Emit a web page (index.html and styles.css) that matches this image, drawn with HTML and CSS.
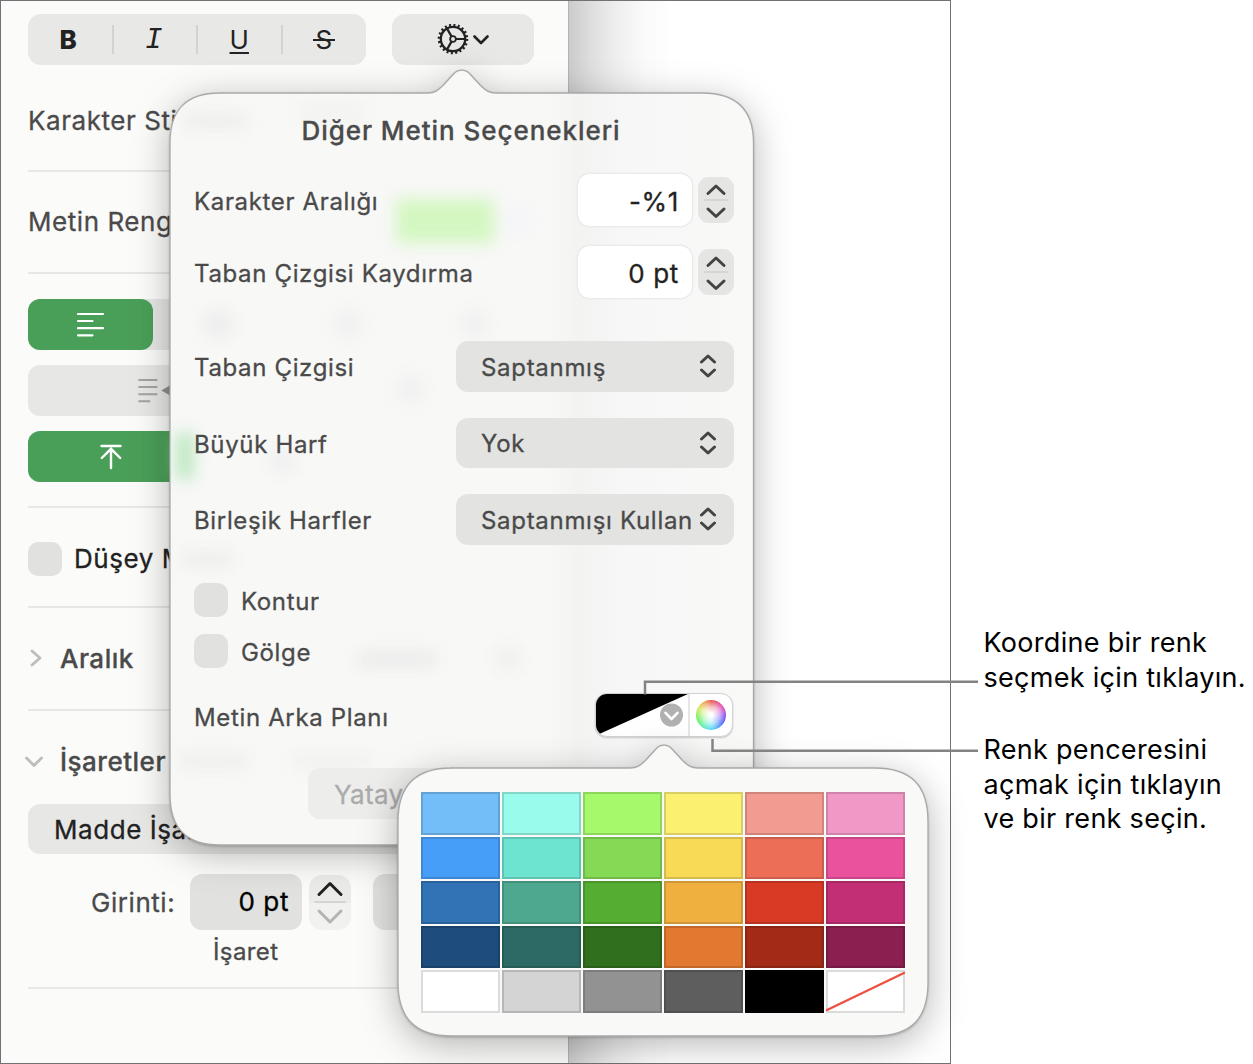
FILE: index.html
```html
<!DOCTYPE html>
<html lang="tr">
<head>
	<meta charset="UTF-8">
	<meta name="viewport" content="width=device-width, initial-scale=1.0">
	<title>Diğer Metin Seçenekleri</title>
	<link rel="stylesheet" href="styles.css">
</head>
<body>
	<div class="window">
		<div class="sidebar">
			<div class="toolbar">
				<div class="styles">
					<div class="bold">B</div>
					<div class="italic">I</div>
					<div class="underline">U</div>
					<div class="strike"><span>S</span></div>
				</div>
				<div class="gear">
					<svg width="32" height="32" viewBox="-16 -15 32 32" fill="none" stroke="#222">
						<circle r="12.2" stroke-width="2.3"/>
						<circle r="14" stroke-width="2.6" stroke-dasharray="2 2.398"/>
						<circle r="2.9" stroke-width="1.8"/>
						<path d="M3 0H12M-1.5 2.6L-6.1 10.6M-1.5 -2.6L-6.1 -10.6" stroke-width="2.2"/>
					</svg>
					<svg width="16" height="10" viewBox="0 0 16 10" fill="none" stroke="#222" stroke-width="2.6" stroke-linecap="round" stroke-linejoin="round"><path d="M1.5 1.5L8 8L14.5 1.5"/></svg>
				</div>
			</div>
			<div class="row style-row"><span class="label">Karakter Stilleri</span></div>
			<div class="row color-row"><span class="label">Metin Rengi</span></div>
			<div class="group first">
				<div class="on quarter">
					<svg width="28" height="26" viewBox="0 0 28 26" stroke="#fff" stroke-width="2.2" stroke-linecap="round"><path d="M1 2H26M1 9H15.500M1 16.2H26M1 23.3H15.500"/></svg>
				</div>
			</div>
			<div class="group indent">
				<svg width="50" height="26" viewBox="0 0 50 26" stroke="#a3a3a3" stroke-width="2.1" stroke-linecap="round"><path d="M1.2 2H18.5M1.2 9H18.5M1.2 16.2H18.5M1.2 23.3H11.5"/><path d="M25.500 12.500L34 7.500V17.500Z" fill="#8e8e8e" stroke="#8e8e8e"/></svg>
			</div>
			<div class="group last">
				<div class="on third">
					<svg width="22" height="26" viewBox="0 0 22 26" fill="none" stroke="#fff" stroke-width="2.4" stroke-linecap="round"><path d="M1.500 2H20.500M11 5V24M1.800 14L11 4.800L20.200 14"/></svg>
				</div>
			</div>
			<div class="row vertical-row"><i class="check"></i><span class="label dark">Düşey Metin</span></div>
			<div class="row spacing-row">
				<svg class="fold" width="16" height="20" viewBox="0 0 16 20"><path d="M4 3L12 10L4 17"/></svg>
				<span class="label head">Aralık</span>
			</div>
			<div class="row bullets-row">
				<svg class="fold" width="18" height="14" viewBox="0 0 18 14"><path d="M1.500 3L9 10.500L16.500 3"/></svg>
				<span class="label head">İşaretler</span>
			</div>
			<div class="bullet-select"><span class="label dark">Madde İşaretleri</span></div>
			<div class="indent-row">
				<span class="label girinti">Girinti:</span>
				<div class="value">0 pt</div>
				<div class="big-stepper">
					<svg width="42" height="55" viewBox="0 0 42 55" fill="none" stroke-width="3" stroke-linecap="round" stroke-linejoin="round"><path d="M10 19.500L21 8.500L32 19.500" stroke="#222"/><path d="M6 27H36" stroke="#d4d4d4" stroke-width="2"/><path d="M10 36L21 47L32 36" stroke="#b4b4b4"/></svg>
				</div>
				<div class="value second"></div>
			</div>
			<div class="captions"><span>İşaret</span></div>
		</div>
		<div class="canvas"></div>
	</div>

	<div class="popover options">
		<svg class="bubble" width="584" height="777" viewBox="0 0 584 777">
			<defs>
				<linearGradient id="glass">
					<stop offset="0" stop-color="#f8f8f7"/>
					<stop offset=".65" stop-color="#f8f8f7"/>
					<stop offset=".7" stop-color="#f3f3f2"/>
					<stop offset=".78" stop-color="#f7f7f7"/>
					<stop offset="1" stop-color="#f9f9f8"/>
				</linearGradient>
			</defs>
			<path class="shape" fill="url(#glass)" d="M48 24H258C266 24 269 20 273 16.500L283.500 5C288 -.3 295.500 -.3 300 5L310.500 16.500C314.500 20 317.500 24 326 24H532C567 24 583.500 41 583.500 74V725C583.500 759 567 776 532 776H50C16 776 0 759 0 725V74C0 41 16 24 50 24Z"/>
			<g class="ghost">
				<rect x="226" y="130" width="98" height="44" fill="#d3f7c0"/>
				<rect x="7" y="364" width="16" height="46" fill="#b5e6bb"/>
				<circle cx="347" cy="151" r="12" fill="#f4f3fa"/>
				<rect x="14" y="46" width="62" height="12" fill="#ebebea"/>
				<rect x="130" y="38" width="64" height="12" fill="#f0f0ef"/>
				<circle cx="48" cy="255" r="14" fill="#ececec"/>
				<circle cx="177" cy="255" r="14" fill="#f0f0f0"/>
				<circle cx="304" cy="255" r="14" fill="#f0f0f0"/>
				<circle cx="240" cy="320" r="14" fill="#f0f0f0"/>
				<circle cx="112" cy="392" r="12" fill="#eeeeee"/>
				<rect x="12" y="484" width="50" height="12" fill="#ebebea"/>
				<rect x="188" y="582" width="78" height="16" fill="#ebebea"/>
				<circle cx="338" cy="590" r="12" fill="#efefee"/>
				<rect x="10" y="686" width="66" height="12" fill="#ececeb"/>
				<rect x="124" y="686" width="76" height="12" fill="#efefee"/>
			</g>
		</svg>
		<h1>Diğer Metin Seçenekleri</h1>
		<div class="line number">
			<span>Karakter Aralığı</span>
			<div class="field">-%1</div>
			<div class="stepper"><svg width="36" height="46" viewBox="0 0 36 46"><path d="M10 16.500L18 9L26 16.500M10 32L18 39.500L26 32"/><path class="split" d="M6.500 23H29.500"/></svg></div>
		</div>
		<div class="line number">
			<span>Taban Çizgisi Kaydırma</span>
			<div class="field">0 pt</div>
			<div class="stepper"><svg width="36" height="46" viewBox="0 0 36 46"><path d="M10 16.500L18 9L26 16.500M10 32L18 39.500L26 32"/><path class="split" d="M6.500 23H29.500"/></svg></div>
		</div>
		<div class="line choice top">
			<span>Taban Çizgisi</span>
			<div class="select"><span>Saptanmış</span><svg width="18" height="24" viewBox="0 0 18 24"><path d="M2.500 8L9 2L15.500 8M2.500 16L9 22L15.500 16"/></svg></div>
		</div>
		<div class="line choice">
			<span>Büyük Harf</span>
			<div class="select"><span>Yok</span><svg width="18" height="24" viewBox="0 0 18 24"><path d="M2.500 8L9 2L15.500 8M2.500 16L9 22L15.500 16"/></svg></div>
		</div>
		<div class="line choice">
			<span>Birleşik Harfler</span>
			<div class="select"><span>Saptanmışı Kullan</span><svg width="18" height="24" viewBox="0 0 18 24"><path d="M2.500 8L9 2L15.500 8M2.500 16L9 22L15.500 16"/></svg></div>
		</div>
		<div class="line tick top"><i class="check"></i><span>Kontur</span></div>
		<div class="line tick"><i class="check"></i><span>Gölge</span></div>
		<div class="line background">
			<span>Metin Arka Planı</span>
			<div class="well">
				<svg width="92" height="42" viewBox="0 0 92 42"><path d="M0 0H92L0 41.500Z"/><circle cx="75.500" cy="21" r="11.500" fill="#b1b1b1"/><path d="M69.500 18.800L75.500 25L81.500 18.800" fill="none" stroke="#fff" stroke-width="2.6" stroke-linecap="round" stroke-linejoin="round"/></svg>
				<div class="wheel-cell"><div class="wheel"></div></div>
			</div>
		</div>
		<div class="flip">Yatay</div>
	</div>

	<div class="popover colors">
		<svg class="bubble" width="532" height="293" viewBox="0 0 532 293">
			<path class="shape" fill="#f9f9f8" d="M52 24H232C240.500 24 243.500 20 247.500 16.500L258 5C262.500 -.3 269.500 -.3 274 5L284.500 16.500C288.500 20 291.500 24 300 24H476C514 24 530 42 530 78V238C530 274 514 292 476 292H54C17 292 0 274 0 238V78C0 42 17 24 54 24Z"/>
		</svg>
		<div class="swatches" id="swatches"></div>
	</div>

	<svg class="leaders" width="340" height="80" viewBox="0 0 340 80"><path d="M5 15.500V2.800H338M72.500 60V71.700H338"/></svg>

	<div class="notes">
		<p>Koordine bir renk<br>seçmek için tıklayın.</p>
		<p>Renk penceresini<br>açmak için tıklayın<br>ve bir renk seçin.</p>
	</div>

	<script type="text/javascript">
		var colors = [
			'#73bdf9', '#99fbeb', '#a5f96b', '#fcf071', '#f29b91', '#f199c6',
			'#479ef8', '#6de4d0', '#84d955', '#f8da57', '#ec6e57', '#ea529e',
			'#3273b5', '#4ea890', '#55ae32', '#f0b03f', '#d83a26', '#c22f75',
			'#1e4c7c', '#2d6a65', '#306f1e', '#e17a30', '#a22a16', '#8a1f50',
			'#ffffff', '#d4d4d4', '#929292', '#5e5e5e', '#000000'
		];
		var swatches = document.getElementById('swatches');
		for (var i = 0; i < colors.length; i++) {
			var cell = document.createElement('div');
			cell.style.backgroundColor = colors[i];
			swatches.appendChild(cell);
		}
		// last cell is "no colour"
		swatches.insertAdjacentHTML('beforeend', '<div class="none"><svg width="79" height="43" viewBox="0 0 79 43"><path d="M0 40.5L79 2.500" stroke="#ee5042" stroke-width="2.4"/></svg></div>');
	</script>
</body>
</html>
```
FILE: styles.css
```css
body {
	margin: 0;
	width: 1253px;
	height: 1064px;
	position: relative;
	overflow: hidden;
	background: #fff;
	font-family: Inter, "Liberation Sans", sans-serif;
	color: #4a4a4a;
}
.window {
	box-sizing: border-box;
	width: 951px;
	height: 1064px;
	border: 1px solid #727176;
	display: flex;
}
.sidebar {
	box-sizing: border-box;
	width: 567px;
	padding: 13px 28px 0 27px;
	background: #fbfbfa;
}
.canvas {
	flex: 1;
	border-left: 1px solid #b4b4b4;
	background: linear-gradient(90deg, #cbcbcb, #dcdcdc 20px, #ededed 45px, #fafafa 75px, #fff 105px);
}
.toolbar { display: flex; gap: 26px; }
.styles {
	width: 338px;
	height: 51px;
	display: flex;
	background: #e8e8e7;
	border-radius: 13px;
	color: #222;
	font-size: 26px;
	line-height: 51px;
	text-align: center;
}
.styles div { flex: 1; position: relative; }
.styles div + div::before {
	content: "";
	position: absolute;
	left: -1px;
	top: 11px;
	width: 2px;
	height: 29px;
	background: #d3d3d2;
}
.styles .bold { font-weight: 800; text-indent: -4px; }
.styles .italic {
	font-family: "Liberation Mono", monospace;
	font-size: 29px;
	font-style: italic;
	line-height: 54px;
	text-indent: -2px;
}
.underline {
	text-decoration: underline;
	text-decoration-thickness: 2px;
	text-underline-offset: 3px;
}
.strike span { position: relative; }
.strike span::after {
	content: "";
	position: absolute;
	left: -2px;
	top: 15px;
	width: 22px;
	height: 2px;
	background: #222;
}
.gear {
	width: 142px;
	height: 51px;
	display: flex;
	align-items: center;
	justify-content: center;
	gap: 4px;
	background: #e8e8e7;
	border-radius: 13px;
}
.row {
	box-sizing: border-box;
	display: flex;
	align-items: center;
	border-bottom: 2px solid #e7e7e6;
}
.label {
	font-size: 26px;
	line-height: 32px;
	letter-spacing: .55px;
	white-space: nowrap;
}
.label, .popover, .captions, .value { -webkit-text-stroke: .3px; }
.dark { color: #222; }
.style-row { height: 107px; padding-top: 6px; }
.color-row { height: 102px; }
.group {
	height: 51px;
	margin-top: 15px;
	background: #e7e7e6;
	border-radius: 12px;
	display: flex;
}
.group.first { margin-top: 25px; }
.group.last { margin-bottom: 24px; }
.indent { align-items: center; padding-left: 110px; }
.on {
	display: flex;
	align-items: center;
	justify-content: center;
	background: #4a9f58;
	border-radius: 12px;
}
.quarter { width: 125px; }
.third { width: 166px; }
.check {
	width: 34px;
	height: 34px;
	border-radius: 10px;
	background: #e1e1e0;
}
.vertical-row {
	height: 102px;
	padding-top: 4px;
	gap: 12px;
	border-top: 2px solid #e7e7e6;
}
.spacing-row { height: 103px; }
.spacing-row .fold { margin: -2px 16px 0 0; }
.bullets-row { height: 93px; padding-top: 8px; border: 0; }
.fold {
	fill: none;
	stroke: #bdbdbd;
	stroke-width: 2.8;
	stroke-linecap: round;
	stroke-linejoin: round;
}
.bullets-row .fold { margin: 0 17px 0 -3px; }
.head { font-weight: 500; letter-spacing: .5px; }
.bullet-select {
	height: 50px;
	padding-left: 26px;
	display: flex;
	align-items: center;
	background: #e7e7e6;
	border-radius: 12px;
}
.bullet-select .label { padding-top: 1px; }
.indent-row { display: flex; margin-top: 20px; height: 56px; padding-left: 63px; }
.girinti { width: 99px; line-height: 57px; }
.value {
	box-sizing: border-box;
	width: 112px;
	padding-right: 13px;
	border-radius: 12px;
	background: #e1e1e0;
	color: #000;
	font-size: 26px;
	line-height: 56px;
	letter-spacing: .6px;
	text-align: right;
}
.big-stepper {
	width: 42px;
	height: 55px;
	margin: 1px 22px 0 7px;
	border-radius: 13px;
	background: linear-gradient(#ebebea 50%, #f1f1f0 50%);
}
.captions {
	height: 57px;
	padding-left: 185px;
	font-size: 24px;
	line-height: 43px;
	letter-spacing: .4px;
	border-bottom: 2px solid #e7e7e6;
}

.popover { position: absolute; box-sizing: border-box; }
.bubble { position: absolute; left: 0; top: -24px; z-index: -1; overflow: visible; }
.shape {
	stroke: #a9a9a9;
	stroke-width: 1.3;
	filter: drop-shadow(0 1px 1px rgba(0, 0, 0, .2)) drop-shadow(0 8px 18px rgba(0, 0, 0, .28));
}
.ghost { filter: blur(8px); }
.options {
	left: 170px;
	top: 93px;
	width: 584px;
	height: 752px;
	padding: 0 20px 0 24px;
	font-size: 24px;
	letter-spacing: .65px;
	z-index: 1;
}
.options h1 {
	margin: 0 6px 6px 0;
	font-size: 26px;
	font-weight: 500;
	line-height: 75px;
	letter-spacing: .95px;
	text-align: center;
}
.line { display: flex; align-items: center; white-space: nowrap; }
.number { height: 52px; margin-bottom: 20px; }
.number > span { padding-top: 3px; flex: 1; }
.field {
	box-sizing: border-box;
	width: 114px;
	height: 52px;
	margin-right: 6px;
	padding-right: 13px;
	border-radius: 12px;
	background: #fff;
	box-shadow: 0 0 0 1.5px #ebebeb;
	color: #222;
	font-size: 26px;
	line-height: 55px;
	text-align: right;
}
.stepper {
	width: 36px;
	height: 46px;
	border-radius: 11px;
	background: #e5e5e4;
}
.stepper svg, .select svg {
	fill: none;
	stroke: #444;
	stroke-width: 3;
	stroke-linecap: round;
	stroke-linejoin: round;
}
.stepper .split { stroke: #cfcfcf; stroke-width: 1.6; }
.choice { height: 50.5px; margin-bottom: 26px; justify-content: space-between; }
.choice.top { margin-top: 43px; }
.choice > span { padding-top: 3px; }
.select {
	box-sizing: border-box;
	width: 278px;
	height: 100%;
	padding: 0 17px 0 25px;
	display: flex;
	align-items: center;
	justify-content: space-between;
	border-radius: 12px;
	background: #e3e3e2;
}
.select span { padding-top: 2px; letter-spacing: .7px; }
.tick { height: 34px; gap: 13px; margin-bottom: 17px; }
.tick.top { margin-top: 38.5px; }
.tick span { padding-top: 3px; }
.background { height: 44px; margin-top: 25px; justify-content: space-between; }
.background > span { padding-top: 4px; }
.well {
	box-sizing: border-box;
	width: 138px;
	height: 44px;
	margin-right: 1px;
	display: flex;
	border: 1px solid #d2d2d2;
	border-radius: 12px;
	background: #fff;
	overflow: hidden;
	box-shadow: 0 1px 2px rgba(0, 0, 0, .2);
}
.wheel-cell {
	flex: 1;
	display: flex;
	align-items: center;
	justify-content: center;
	border-left: 2px solid #e6e6e6;
}
.wheel {
	width: 30px;
	height: 30px;
	border-radius: 50%;
	background: radial-gradient(#fff 8%, rgba(255, 255, 255, .6) 40%, rgba(255, 255, 255, 0) 70%),
		conic-gradient(#e4584c, #e650b8 55deg, #8a4df0 95deg, #4a6cf5 125deg, #55d8f5 175deg, #55efb0 215deg, #6cf05a 255deg, #d8e85a 300deg, #f0a050 335deg, #e4584c);
}
.flip {
	box-sizing: border-box;
	width: 200px;
	height: 51px;
	margin: 31px 0 0 114px;
	padding-left: 26px;
	border-radius: 12px;
	background: #ededec;
	color: #ababaa;
	font-size: 26px;
	line-height: 53px;
	letter-spacing: .3px;
}

.colors {
	left: 398px;
	top: 768px;
	width: 531px;
	height: 268px;
	padding: 24px 23px;
	z-index: 2;
}
.swatches {
	display: grid;
	grid-template-columns: repeat(6, 79px);
	grid-template-rows: repeat(5, 1fr);
	gap: 2px;
	width: 484px;
	height: 221px;
}
.swatches div { box-shadow: inset 0 0 0 2px rgba(0, 0, 0, .14); overflow: hidden; }
.swatches .none { background: #fff; }

.leaders {
	position: absolute;
	left: 640px;
	top: 679px;
	z-index: 3;
	fill: none;
	stroke: #838383;
	stroke-width: 2.5;
}
.notes {
	position: absolute;
	left: 983.5px;
	top: 626px;
	color: #000;
	font-size: 27px;
	line-height: 34.7px;
	letter-spacing: .29px;
	white-space: nowrap;
}
.notes p { margin: 0 0 37.6px; }
```
